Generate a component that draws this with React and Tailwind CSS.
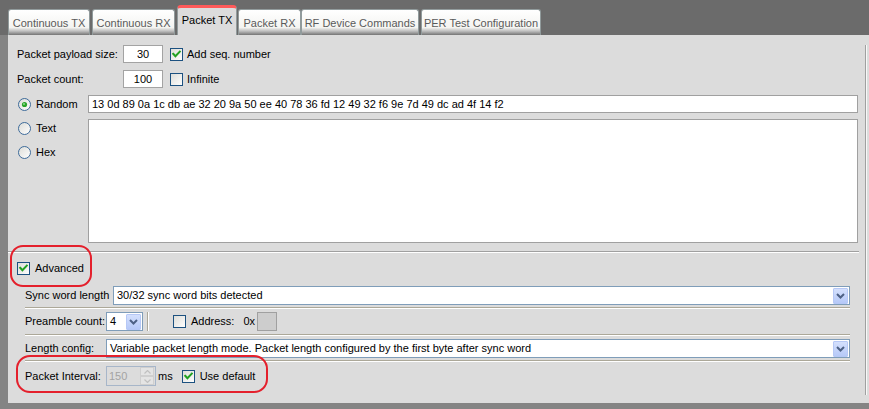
import React from 'react';

// XP-style packet TX settings panel

function CheckBox({ checked }) {
  return (
    <svg width="13" height="13" viewBox="0 0 13 13" className="shrink-0">
      <defs>
        <linearGradient id="cbfill" x1="0" y1="0" x2="1" y2="1">
          <stop offset="0" stopColor="#dcdcd7" />
          <stop offset="1" stopColor="#ffffff" />
        </linearGradient>
      </defs>
      <rect x="0.5" y="0.5" width="12" height="12" fill="url(#cbfill)" stroke="#1c5180" />
      {checked && (
        <path d="M3.2 5.8 L5.4 8.2 L9.8 3.6" fill="none" stroke="#21a121" strokeWidth="2" strokeLinecap="square" />
      )}
    </svg>
  );
}

function Radio({ on }) {
  return (
    <svg width="13" height="13" viewBox="0 0 13 13" className="shrink-0">
      <defs>
        <linearGradient id="rbfill" x1="0" y1="0" x2="1" y2="1">
          <stop offset="0" stopColor="#dcdcd7" />
          <stop offset="1" stopColor="#ffffff" />
        </linearGradient>
      </defs>
      <circle cx="6.5" cy="6.5" r="6" fill="url(#rbfill)" stroke="#3d6a99" />
      {on && <circle cx="6.5" cy="6.5" r="2.6" fill="#2aa52a" />}
      {on && <circle cx="6" cy="6" r="1" fill="#8fdc8f" />}
    </svg>
  );
}

function ArrowButton() {
  return (
    <div className="w-[15px] h-[16px] mr-[1px] shrink-0 rounded-[1px] border border-[#b6c8f6] bg-[linear-gradient(to_bottom,#d4e0fd,#b6c9f8)] flex items-center justify-center">
      <svg width="9" height="6" viewBox="0 0 9 6">
        <path d="M1 1 L4.5 4.5 L8 1" fill="none" stroke="#4d6185" strokeWidth="2" />
      </svg>
    </div>
  );
}

function Select({ className, text }) {
  return (
    <div className={`h-[19px] border border-[#7f9db9] bg-white flex items-center ${className}`}>
      <span className="flex-1 pl-[3px] whitespace-nowrap overflow-hidden">{text}</span>
      <ArrowButton />
    </div>
  );
}

function Separator({ className }) {
  return (
    <div className={className}>
      <div className="h-px bg-[#aca899]" />
      <div className="h-px bg-white" />
    </div>
  );
}

export default function App() {
  return (
    <div className="w-[869px] h-[409px] bg-[#848484] overflow-hidden relative font-['Liberation_Sans',Arial,sans-serif] text-[11px] leading-[13px] text-black">
      {/* tab strip */}
      <div className="h-[35px] bg-[#6b6b6b] flex items-end pl-[8px]">
        <div className="w-[82px] h-[26px] border border-b-0 border-[#919b9c] rounded-t-[3px] bg-[linear-gradient(to_bottom,#ffffff,#f4f4f1_70%,#c0c0c0_84%,#747474)] text-[#5a5a5a] flex justify-center pt-[7px]">Continuous TX</div>
        <div className="w-[83px] h-[26px] ml-[2px] border border-b-0 border-[#919b9c] rounded-t-[3px] bg-[linear-gradient(to_bottom,#ffffff,#f4f4f1_70%,#c0c0c0_84%,#747474)] text-[#5a5a5a] flex justify-center pt-[7px]">Continuous RX</div>
        <div className="w-[60px] h-[30px] ml-[2px] border-x border-t-[3px] border-x-[#919b9c] border-t-[#ff5a5a] rounded-t-[4px] bg-[#dcdcdc] flex justify-center pt-[6px]">Packet TX</div>
        <div className="w-[63px] h-[26px] ml-[1px] border border-b-0 border-[#919b9c] rounded-t-[3px] bg-[linear-gradient(to_bottom,#ffffff,#f4f4f1_70%,#c0c0c0_84%,#747474)] text-[#5a5a5a] flex justify-center pt-[7px]">Packet RX</div>
        <div className="w-[118px] h-[26px] border border-b-0 border-[#919b9c] rounded-t-[3px] bg-[linear-gradient(to_bottom,#ffffff,#f4f4f1_70%,#c0c0c0_84%,#747474)] text-[#5a5a5a] flex justify-center pt-[7px]">RF Device Commands</div>
        <div className="w-[120px] h-[26px] ml-[2px] border border-b-0 border-[#919b9c] rounded-t-[3px] bg-[linear-gradient(to_bottom,#ffffff,#f4f4f1_70%,#c0c0c0_84%,#747474)] text-[#5a5a5a] flex justify-center pt-[7px]">PER Test Configuration</div>
      </div>

      {/* panel */}
      <div className="ml-[8px] h-[368px] bg-[#dcdcdc] pt-[9px]">
        <div className="w-[858px] h-[350px] border-r border-[#a0a0a0] shadow-[1px_0_0_#f8f8f8]">
          {/* payload size */}
          <div className="mt-[1px] h-[18px] flex items-center pl-[9px]">
            <span className="w-[106px]">Packet payload size:</span>
            <div className="w-[40px] h-[18px] border border-[#a3a3a3] bg-white flex items-center justify-center">30</div>
            <div className="ml-[7px]"><CheckBox checked /></div>
            <span className="ml-[4px]">Add seq. number</span>
          </div>
          {/* packet count */}
          <div className="mt-[7px] h-[18px] flex items-center pl-[9px]">
            <span className="w-[106px]">Packet count:</span>
            <div className="w-[40px] h-[18px] border border-[#a3a3a3] bg-white flex items-center justify-center">100</div>
            <div className="ml-[7px]"><CheckBox /></div>
            <span className="ml-[4px]">Infinite</span>
          </div>
          {/* random */}
          <div className="mt-[7px] h-[18px] flex items-center">
            <div className="w-[80px] flex items-center pl-[10px]">
              <Radio on />
              <span className="ml-[5px]">Random</span>
            </div>
            <div className="w-[770px] h-[18px] border border-[#a0a0a0] bg-white flex items-center pl-[3px] whitespace-nowrap">
              13 0d 89 0a 1c db ae 32 20 9a 50 ee 40 78 36 fd 12 49 32 f6 9e 7d 49 dc ad 4f 14 f2
            </div>
          </div>
          {/* text / hex */}
          <div className="mt-[6px] flex">
            <div className="w-[80px] pl-[10px] pt-[3px] flex flex-col gap-[11px]">
              <div className="flex items-center h-[13px]">
                <Radio />
                <span className="ml-[5px]">Text</span>
              </div>
              <div className="flex items-center h-[13px]">
                <Radio />
                <span className="ml-[5px]">Hex</span>
              </div>
            </div>
            <div className="w-[770px] h-[124px] border border-[#a0a0a0] bg-white" />
          </div>

          <div className="mt-[8px] w-[851px]">
            <div className="h-px bg-[#a0a0a0]" />
            <div className="h-px bg-white" />
          </div>

          {/* advanced */}
          <div className="mt-[9px] h-[13px] flex items-center pl-[9px]">
            <CheckBox checked />
            <span className="ml-[5px]">Advanced</span>
          </div>

          {/* sync word */}
          <div className="mt-[11px] h-[19px] flex items-center pl-[17px]">
            <span className="w-[88px]">Sync word length</span>
            <Select className="w-[737px]" text="30/32 sync word bits detected" />
          </div>
          <Separator className="mt-[2px] ml-[17px] w-[825px]" />

          {/* preamble */}
          <div className="mt-[3px] h-[19px] flex items-center pl-[17px]">
            <span className="w-[81px] whitespace-nowrap">Preamble count:</span>
            <Select className="w-[37px]" text="4" />
            <div className="ml-[4px] h-[19px] w-[2px] flex">
              <div className="w-px bg-[#aca899]" />
              <div className="w-px bg-white" />
            </div>
            <div className="ml-[24px]"><CheckBox /></div>
            <span className="ml-[5px]">Address:</span>
            <span className="ml-[9px]">0x</span>
            <div className="ml-[2px] w-[20px] h-[19px] border border-[#a0a0a0] bg-[#cdcdcd]" />
          </div>
          <Separator className="mt-[3px] ml-[17px] w-[825px]" />

          {/* length config */}
          <div className="mt-[3px] h-[19px] flex items-center pl-[17px]">
            <span className="w-[81px]">Length config:</span>
            <Select className="w-[744px]" text="Variable packet length mode. Packet length configured by the first byte after sync word" />
          </div>
          <Separator className="mt-[2px] ml-[17px] w-[825px]" />

          {/* packet interval */}
          <div className="mt-[4px] h-[20px] flex items-center pl-[17px]">
            <span className="w-[81px]">Packet Interval:</span>
            <div className="w-[50px] h-[20px] border border-[#a7b6c9] bg-[#dcdcdc] flex items-center">
              <span className="flex-1 pl-[2px] text-[#a3a3a3]">150</span>
              <div className="w-[14px] h-[18px] mr-[1px] flex flex-col">
                <div className="flex-1 border border-[#cfcfcf] bg-[#e4e4e4] flex items-center justify-center">
                  <svg width="7" height="4" viewBox="0 0 7 4"><path d="M0.5 3.5 L3.5 0.5 L6.5 3.5" fill="none" stroke="#c0c0c0" strokeWidth="1.2" /></svg>
                </div>
                <div className="flex-1 border border-[#cfcfcf] bg-[#e4e4e4] flex items-center justify-center">
                  <svg width="7" height="4" viewBox="0 0 7 4"><path d="M0.5 0.5 L3.5 3.5 L6.5 0.5" fill="none" stroke="#c0c0c0" strokeWidth="1.2" /></svg>
                </div>
              </div>
            </div>
            <span className="ml-[2px]">ms</span>
            <div className="ml-[9px]"><CheckBox checked /></div>
            <span className="ml-[5px]">Use default</span>
          </div>
        </div>
      </div>

      {/* red annotation outlines */}
      <div className="absolute left-[10px] top-[245px] w-[82px] h-[42px] border-2 border-[#e4202c] rounded-[13px] pointer-events-none" />
      <div className="absolute left-[16px] top-[355px] w-[252px] h-[38px] border-2 border-[#e4202c] rounded-[14px] pointer-events-none" />
    </div>
  );
}
